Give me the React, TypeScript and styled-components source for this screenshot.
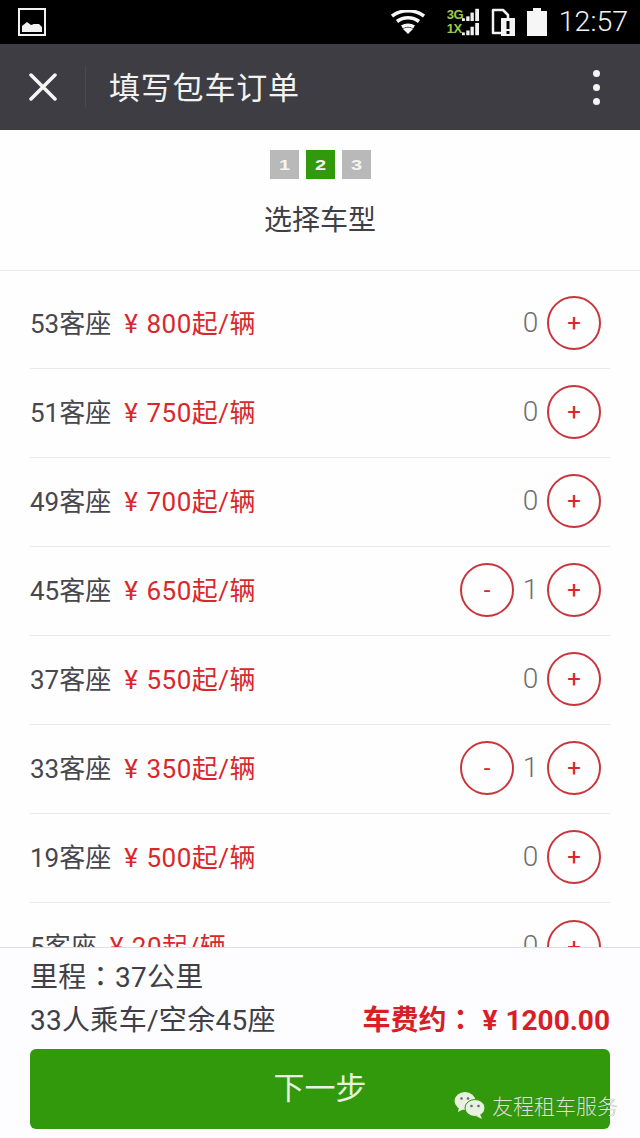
import * as React from "react";
import styled, { createGlobalStyle } from "styled-components";

const GlobalStyle = createGlobalStyle`
  html, body {
    margin: 0;
    padding: 0;
    background: #fff;
  }
  * {
    box-sizing: border-box;
  }
`;

const Page = styled.div`
  position: relative;
  width: 640px;
  height: 1138px;
  display: flex;
  flex-direction: column;
  overflow: hidden;
  background: #fefefe;
  font-family: Roboto, "Noto Sans CJK SC", sans-serif;
  color: #44444a;
`;

const StatusBar = styled.div`
  height: 44px;
  flex: none;
  background: #000;
  display: flex;
  align-items: center;
  padding: 0 12px 0 18px;
`;

const StatusIcons = styled.div`
  margin-left: auto;
  display: flex;
  align-items: center;
  gap: 12px;
`;

const Clock = styled.div`
  font-size: 28.5px;
  font-weight: 300;
  color: #f2f2f2;
  line-height: 44px;
`;

const Network = styled.div`
  display: flex;
  align-items: center;
  margin-left: 10px;
`;

const NetLabel = styled.div`
  display: flex;
  flex-direction: column;
  font-family: "Liberation Sans", sans-serif;
  font-size: 13px;
  font-weight: 700;
  line-height: 14px;
  letter-spacing: -0.5px;
  color: #9ccb4c;
  width: 15px;
`;

const AppBar = styled.div`
  height: 86px;
  flex: none;
  background: #3d3d43;
  display: flex;
  align-items: center;
  padding-left: 29px;
  padding-right: 40px;
`;

const BarDivider = styled.div`
  width: 1px;
  height: 42px;
  background: #48484e;
  margin: 0 23px 0 28px;
`;

const BarTitle = styled.div`
  font-size: 31px;
  color: #f2f2f2;
  letter-spacing: 0.8px;
  padding-bottom: 4px;
`;

const MoreDots = styled.div`
  margin-left: auto;
  display: flex;
  flex-direction: column;
  gap: 7px;
`;

const Dot = styled.span`
  width: 7px;
  height: 7px;
  border-radius: 50%;
  background: #f4f4f4;
`;

const StepHeader = styled.div`
  height: 141px;
  flex: none;
  border-bottom: 1px solid #e9e9e9;
  display: flex;
  flex-direction: column;
  align-items: center;
  padding-top: 20px;
`;

const Steps = styled.div`
  display: flex;
  gap: 7px;
`;

const Step = styled.div<{ $active?: boolean }>`
  width: 29px;
  height: 29px;
  display: flex;
  align-items: center;
  justify-content: center;
  background: ${(p) => (p.$active ? "#33990c" : "#b9b9b9")};
  color: #f4f4f4;
  font-family: "Liberation Sans", sans-serif;
  font-size: 16px;
  font-weight: 700;
`;

const StepDigit = styled.span`
  display: inline-block;
  transform: scale(1.25, 0.95);
`;

const StepTitle = styled.div`
  margin-top: 22px;
  font-size: 28px;
  line-height: 40px;
  color: #3f3f45;
`;

const List = styled.div`
  flex: 1;
  min-height: 0;
  overflow: hidden;
  padding: 9px 30px 0;
`;

const Row = styled.div`
  height: 89px;
  display: flex;
  align-items: center;
  border-bottom: 1px solid #e9e9e9;
  padding-right: 9px;
  &:last-child {
    border-bottom: none;
  }
`;

const Seats = styled.span`
  font-size: 26px;
  color: #47474d;
  padding-bottom: 6px;
`;

const Price = styled.span`
  font-size: 26px;
  color: #d8282c;
  margin-left: 13px;
  letter-spacing: 0.5px;
  padding-bottom: 6px;
`;

const Yen = styled.span`
  margin-right: 8px;
`;

const FareYen = styled.span`
  margin: 0 8px;
`;

const Stepper = styled.div`
  margin-left: auto;
  padding-bottom: 2px;
  display: flex;
  align-items: center;
`;

const Count = styled.span`
  font-size: 28px;
  font-weight: 300;
  color: #6e6e72;
  width: 33px;
  text-align: center;
  padding-bottom: 2px;
`;

const RoundButton = styled.button`
  width: 54px;
  height: 54px;
  border-radius: 50%;
  border: 2px solid #c8353c;
  background: #fefefe;
  color: #d8282c;
  padding: 0;
  font-family: Roboto, sans-serif;
  font-size: 24px;
  line-height: 1;
`;

const Footer = styled.div`
  flex: none;
  height: 191px;
  background: #fdfcfe;
  border-top: 1px solid #dedde2;
  padding: 8px 30px 0;
`;

const Line = styled.div`
  font-size: 28px;
  line-height: 43px;
  color: #3f3f45;
  letter-spacing: 0.3px;
`;

const Colon = styled.span`
  font-family: "Noto Sans CJK TC", sans-serif;
  line-height: 0;
`;

const Summary = styled.div`
  display: flex;
  justify-content: space-between;
  align-items: center;
`;

const Fare = styled.div`
  font-size: 28px;
  line-height: 43px;
  font-weight: 700;
  color: #d81e26;
`;

const NextButton = styled.button`
  display: block;
  width: 100%;
  height: 80px;
  margin-top: 7px;
  border: none;
  border-radius: 6px;
  background: #33990c;
  color: #e6f2df;
  font-family: Roboto, "Noto Sans CJK SC", sans-serif;
  font-size: 31px;
  padding: 0 0 8px;
`;

const Watermark = styled.div`
  position: absolute;
  left: 454px;
  top: 1085px;
  display: flex;
  align-items: center;
  gap: 6px;
  font-size: 21px;
  line-height: 40px;
  color: #dbe7d2;
  text-shadow: 0 0 1px rgba(70, 70, 70, 0.55);
  font-family: "Noto Sans CJK SC", sans-serif;
  font-weight: 300;
`;

const rows = [
  { seats: 53, price: 800, count: 0 },
  { seats: 51, price: 750, count: 0 },
  { seats: 49, price: 700, count: 0 },
  { seats: 45, price: 650, count: 1 },
  { seats: 37, price: 550, count: 0 },
  { seats: 33, price: 350, count: 1 },
  { seats: 19, price: 500, count: 0 },
  { seats: 5, price: 20, count: 0 },
];

const ImageIcon = () => (
  <svg width="28" height="28" viewBox="0 0 28 28">
    <rect x="1" y="1" width="26" height="26" fill="none" stroke="#f2f2f2" strokeWidth="2" />
    <path d="M4 24v-6l5-4 4 3 3-1 5 0 3 3v5z" fill="#f2f2f2" />
  </svg>
);

const WifiIcon = () => (
  <svg width="34" height="24" viewBox="0 0 34 24" fill="none" stroke="#f6f6f6" strokeWidth="3.500">
    <path d="M1 6c9.500-7 22.500-7 32 0" />
    <path d="M6 11.500c6.500-5 15.500-5 22 0" />
    <path d="M11 17c3.500-2.500 8.500-2.500 12 0" />
    <path d="M17 24l-5-5c3-2 7-2 10 0z" fill="#f6f6f6" stroke="none" />
  </svg>
);

const SignalIcon = () => (
  <svg width="17" height="28" viewBox="0 0 18 28" fill="#f2f2f2">
    <rect x="0" y="10" width="3" height="3" />
    <rect x="4.500" y="8" width="3.500" height="5" />
    <rect x="9" y="4" width="3.500" height="9" />
    <rect x="14" y="0" width="4" height="13" />
    <rect x="0" y="25" width="3" height="3" />
    <rect x="4.500" y="23" width="3.500" height="5" />
    <rect x="9" y="19" width="3.500" height="9" />
    <rect x="14" y="15" width="4" height="13" />
  </svg>
);

const SimAlertIcon = () => (
  <svg width="24" height="28" viewBox="0 0 24 28">
    <path d="M2 2h10l5 5v18H2z" fill="none" stroke="#f2f2f2" strokeWidth="2.500" strokeLinejoin="round" />
    <rect x="10" y="10" width="14" height="18" fill="#f2f2f2" />
    <rect x="15.500" y="13" width="3" height="8" fill="#000" />
    <rect x="15.500" y="23" width="3" height="3" fill="#000" />
  </svg>
);

const BatteryIcon = () => (
  <svg width="20" height="28" viewBox="0 0 20 28" fill="#f6f6f6">
    <path d="M6 0h8v3h6v25H0V3h6z" />
  </svg>
);

const CloseIcon = () => (
  <svg width="28" height="28" viewBox="0 0 28 28" stroke="#f6f6f6" strokeWidth="3.500" strokeLinecap="round">
    <path d="M2 2l24 24M26 2L2 26" />
  </svg>
);

const WechatIcon = () => (
  <svg width="32" height="28" viewBox="0 0 32 28">
    <ellipse cx="11" cy="10" rx="10.500" ry="9" fill="#e8f0e0" />
    <path d="M5 16l-1 5 6-3z" fill="#e8f0e0" />
    <circle cx="7.500" cy="7.500" r="1.300" fill="#667" />
    <circle cx="14" cy="7.500" r="1.300" fill="#667" />
    <ellipse cx="21" cy="17" rx="10" ry="8.500" fill="#e8f0e0" stroke="#33990c" strokeWidth="1" />
    <path d="M26 23l2 5-6-3z" fill="#e8f0e0" />
    <circle cx="17.500" cy="15" r="1.300" fill="#667" />
    <circle cx="24.500" cy="15" r="1.300" fill="#667" />
  </svg>
);

const App = () => (
  <Page>
    <GlobalStyle />
    <StatusBar>
      <ImageIcon />
      <StatusIcons>
        <WifiIcon />
        <Network>
          <NetLabel>
            <span>3G</span>
            <span>1X</span>
          </NetLabel>
          <SignalIcon />
        </Network>
        <SimAlertIcon />
        <BatteryIcon />
        <Clock>12:57</Clock>
      </StatusIcons>
    </StatusBar>
    <AppBar>
      <CloseIcon />
      <BarDivider />
      <BarTitle>填写包车订单</BarTitle>
      <MoreDots>
        <Dot />
        <Dot />
        <Dot />
      </MoreDots>
    </AppBar>
    <StepHeader>
      <Steps>
        <Step>
          <StepDigit>1</StepDigit>
        </Step>
        <Step $active>
          <StepDigit>2</StepDigit>
        </Step>
        <Step>
          <StepDigit>3</StepDigit>
        </Step>
      </Steps>
      <StepTitle>选择车型</StepTitle>
    </StepHeader>
    <List>
      {rows.map((r) => (
        <Row key={r.seats}>
          <Seats>{r.seats}客座</Seats>
          <Price>
            <Yen>¥</Yen>
            {r.price}起/辆
          </Price>
          <Stepper>
            {r.count > 0 && <RoundButton>-</RoundButton>}
            <Count>{r.count}</Count>
            <RoundButton>+</RoundButton>
          </Stepper>
        </Row>
      ))}
    </List>
    <Footer>
      <Line>
        里程<Colon>：</Colon>37公里
      </Line>
      <Summary>
        <Line>33人乘车/空余45座</Line>
        <Fare>
          车费约<Colon>：</Colon>
          <FareYen>¥</FareYen>1200.00
        </Fare>
      </Summary>
      <NextButton>下一步</NextButton>
    </Footer>
    <Watermark>
      <WechatIcon />
      友程租车服务
    </Watermark>
  </Page>
);

export default App;
